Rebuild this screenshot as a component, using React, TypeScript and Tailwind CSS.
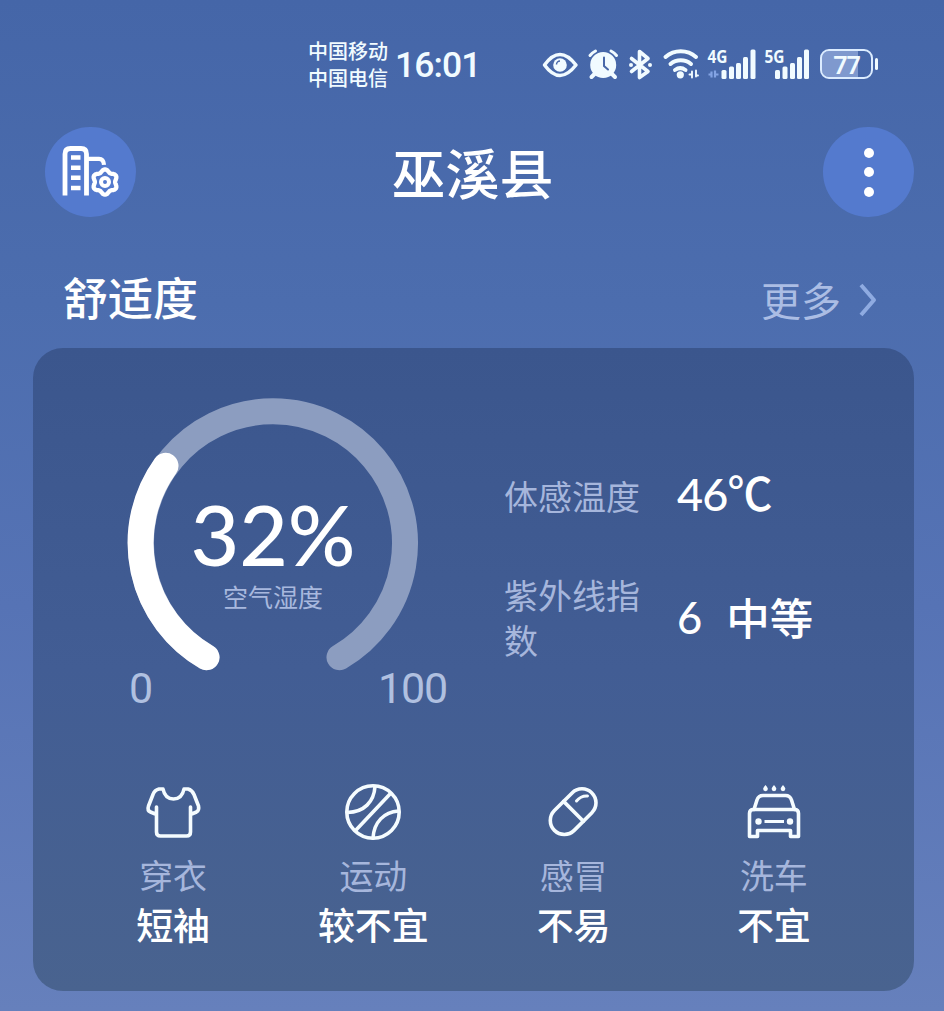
import type { ReactNode } from "react";

const cjk = "font-['Noto_Sans_CJK_SC',sans-serif]";
const lato = "font-['Lato','Noto_Sans_CJK_SC',sans-serif]";
const roboto = "font-['Roboto','Noto_Sans_CJK_SC',sans-serif]";

// Closed outline with six rounded lobes, one of them pointing straight up.
function lobedRing(cx: number, cy: number, radius: number, depth: number) {
  const points = Array.from({ length: 72 }, (_, i) => {
    const angle = (i / 72) * Math.PI * 2;
    const r = radius + depth * Math.cos(6 * angle);
    return `${(cx + r * Math.sin(angle)).toFixed(2)} ${(cy - r * Math.cos(angle)).toFixed(2)}`;
  });
  return `M${points.join("L")}Z`;
}

function StatusBar() {
  return (
    <div className="flex h-[64px] items-start pl-[308px] text-[#f1fbff]">
      <div className="w-[87px] shrink-0 text-[20px] font-medium leading-[27px]">
        <div>中国移动</div>
        <div>中国电信</div>
      </div>
      <div className={`mt-[8px] w-[145px] shrink-0 text-[35.500px] font-medium leading-[40px] tracking-[-0.9px] ${roboto}`}>
        16:01
      </div>
      <svg className="mt-[7px] shrink-0" width="43" height="40" viewBox="540 44 43 40" fill="none" stroke="currentColor">
        <path d="M544.5 65C551 56 556 54.5 560 54.5S569 56 576 65C569 74 564 75.500 560 75.500S551 74 544.500 65Z" strokeWidth="3.500" strokeLinejoin="round" />
        <circle cx="560" cy="65" r="6.800" fill="currentColor" stroke="none" />
        <path d="M556.500 64.500a3.500 3.500 0 0 1 3.500-3.500" stroke="#4868a9" strokeWidth="1.500" />
      </svg>
      <svg className="mt-[7px] shrink-0" width="42" height="40" viewBox="583 44 42 40" fill="none" stroke="currentColor" strokeLinecap="round">
        <circle cx="603.200" cy="65" r="13" fill="currentColor" stroke="none" />
        <path d="M590 55.500a17 17 0 0 1 5.500-4.500M616.500 55.500a17 17 0 0 0-5.500-4.500" strokeWidth="3" />
        <path d="M594.500 74l-3 3M612 74l3 3" strokeWidth="4" />
        <path d="M604 57.500V66l4 3.500" stroke="#4868a9" strokeWidth="2" />
      </svg>
      <svg className="mt-[7px] shrink-0" width="32" height="40" viewBox="625 44 32 40" fill="none" stroke="currentColor" strokeLinejoin="round" strokeLinecap="round">
        <path d="M631.500 58.500L648 71.500l-8.500 6V51.500l8.500 7L631.500 71.500" strokeWidth="3.600" />
        <circle cx="631" cy="65" r="2" fill="currentColor" stroke="none" />
        <circle cx="650" cy="65" r="2" fill="currentColor" stroke="none" />
      </svg>
      <svg className="mt-[7px] shrink-0" width="46" height="40" viewBox="657 44 46 40" fill="none" stroke="currentColor" strokeLinecap="round">
        <path d="M665.500 57a23 23 0 0 1 30.500 0M670.500 64a16 16 0 0 1 20.500 0M675 70a9 9 0 0 1 10.500 0" strokeWidth="4" />
        <circle cx="680.300" cy="74.800" r="3.600" fill="currentColor" stroke="none" />
        <path d="M689.500 74.500h2.500v-3M692 71.500v6M696 70.500v6M696 75.500h2" strokeWidth="1.900" />
      </svg>
      <svg className="mt-[7px] shrink-0" width="60" height="40" viewBox="703 44 60 40" fill="currentColor">
        <text x="707.500" y="63" fontSize="18" fontWeight="700" textLength="20" lengthAdjust="spacingAndGlyphs" fontFamily="Noto Sans">4G</text>
        <rect x="721.500" y="70" width="5" height="9" rx="1.500" />
        <rect x="729" y="66.500" width="5" height="12.500" rx="1.500" />
        <rect x="736" y="63" width="5" height="16" rx="1.500" />
        <rect x="743" y="57" width="5" height="22" rx="1.500" />
        <rect x="750.500" y="49.500" width="5" height="29.500" rx="1.500" />
        <path d="M708.500 74.500h3v-3v6M715 70.500v7M715 74.500h3.500" fill="none" stroke="#83a3e4" strokeWidth="2.200" />
      </svg>
      <svg className="mt-[7px] shrink-0" width="53" height="40" viewBox="763 44 53 40" fill="currentColor">
        <text x="764.500" y="63" fontSize="18" fontWeight="700" textLength="20" lengthAdjust="spacingAndGlyphs" fontFamily="Noto Sans">5G</text>
        <rect x="775" y="70" width="5" height="9" rx="1.500" />
        <rect x="782.500" y="66.500" width="5" height="12.500" rx="1.500" />
        <rect x="790" y="63" width="5" height="16" rx="1.500" />
        <rect x="797" y="57" width="5" height="22" rx="1.500" />
        <rect x="804" y="49.500" width="5" height="29.500" rx="1.500" />
      </svg>
      <div className="mt-[12px] ml-[4px] flex items-center gap-[2px]">
        <div className="flex h-[30px] w-[53px] items-center justify-center rounded-[9px] border-[2.5px] border-[#dcecff] bg-[linear-gradient(90deg,#7f99ce_0%,#7f99ce_74%,transparent_74%)] bg-clip-padding font-['Noto_Sans',sans-serif] text-[25px] font-semibold leading-[25px] tracking-[-1px]">
          77
        </div>
        <div className="h-[12px] w-[3px] rounded-full bg-[#f1fbff]" />
      </div>
    </div>
  );
}

function Header() {
  return (
    <div className="flex h-[90px] items-center justify-between pr-[30px] pl-[45px]">
      <button className="flex h-[90px] w-[91px] items-center justify-center rounded-full bg-[#547ace]">
        <svg width="91" height="90" viewBox="45 127 91 90" fill="none" stroke="#fff" strokeLinejoin="round">
          <path d="M65 195.500V154q0-5.500 5.500-5.500h10.500q5.500 0 5.500 5.500V195.500" strokeWidth="4.800" />
          <path d="M71 157.500h9.500M71 167.800h9.500M71 177.800h9.500M71 188h9.500" strokeWidth="4.600" />
          <path d="M88 158.800h11q4.500 0 5 6" strokeWidth="4.200" />
          <path d={lobedRing(105, 182, 11.4, 1.3)} strokeWidth="4.300" />
          <circle cx="105" cy="182" r="4" strokeWidth="4" />
        </svg>
      </button>
      <h1 className="mt-[-1px] mr-[14px] text-[54px] font-medium leading-[80px] text-white">巫溪县</h1>
      <button className="flex h-[90px] w-[91px] flex-col items-center justify-center gap-[9.500px] rounded-full bg-[#547ace]">
        <span className="size-[10px] rounded-full bg-white" />
        <span className="size-[10px] rounded-full bg-white" />
        <span className="size-[10px] rounded-full bg-white" />
      </button>
    </div>
  );
}

function Gauge() {
  return (
    <div className="relative h-[320px] w-[372px]">
      <svg className="block" width="372" height="320" viewBox="88 388 372 320" fill="none" strokeWidth="26" strokeLinecap="round">
        <path d="M206.500 657.300A132 132 0 1 1 339.500 657.300" stroke="#8c9dc0" />
        <path d="M206.500 657.300A132 132 0 0 1 165.500 465.800" stroke="#fff" />
      </svg>
      <div className="absolute top-[108px] left-0 w-[370px] text-center">
        <div className={`text-[84px] font-medium leading-[76px] text-white ${lato}`}>32%</div>
        <div className="mt-[6px] text-[25px] leading-[36px] text-[#a8b8de]">空气湿度</div>
      </div>
      <div className={`absolute top-[275px] right-[13px] left-[41px] flex justify-between text-[43px] leading-[50px] tracking-[-1.2px] text-[#b0c0e0] ${roboto}`}>
        <span>0</span>
        <span>100</span>
      </div>
    </div>
  );
}

function Tip({ icon, label, value }: { icon: ReactNode; label: string; value: string }) {
  return (
    <div className="flex flex-col items-center">
      <svg width="64" height="64" viewBox="0 0 64 64" fill="none" stroke="#f5fcff" strokeWidth="3.600" strokeLinecap="round" strokeLinejoin="round">
        {icon}
      </svg>
      <div className="mt-[7px] text-[34px] leading-[48px] text-[#a6b6dc]">{label}</div>
      <div className="mt-[1px] text-[37px] font-medium leading-[48px] text-white">{value}</div>
    </div>
  );
}

const shirt = (
  <path d="M15.500 27V52q0 4 4 4H45.500q4 0 4-4V27M15.500 34.500L9.500 32Q6 30.500 7.500 26L12 14.500Q13.500 10 18 9H22Q24 19 32.500 19T43 9H47Q51 10 53 14.500L57.500 26Q58.500 30.500 55.500 32L49.500 34.500" />
);

const ball = (
  <>
    <circle cx="32" cy="32" r="26.200" />
    <path d="M49.500 13.500L15 50M34 6.500C33 22 23 32 6.500 32.500M57.500 31C43 32 33 42 32 58" />
  </>
);

const pill = (
  <>
    <g transform="rotate(45 31.5 32)">
      <rect x="17" y="5.500" width="28" height="53" rx="14" />
      <path d="M17 31.500H45" />
    </g>
    <path d="M34.500 21Q39 15.500 45.500 16" strokeWidth="3" />
  </>
);

const car = (
  <>
    <path d="M12 29.500L15 20Q16.500 15.500 21 15.500H43.500Q48 15.500 49.500 20L52.500 29.500" />
    <path d="M11.500 29.500H52.500Q56.500 29.500 56.500 33.500V56.500H48.500V50.500H15.500V56.500H7.500V33.500Q7.500 29.500 11.500 29.500Z" />
    <path d="M22.500 41.500H42" strokeWidth="3" strokeLinecap="butt" />
    <g fill="#f5fcff" stroke="none">
      <circle cx="16.500" cy="41.500" r="3.200" />
      <circle cx="48" cy="41.500" r="3.200" />
      <path d="M23.500 5q2.400 2.700 2.400 3.800a2.400 2.400 0 0 1-4.800 0q0-1.100 2.400-3.800ZM32 5q2.400 2.700 2.400 3.800a2.400 2.400 0 0 1-4.800 0q0-1.100 2.400-3.800ZM41 5q2.400 2.700 2.400 3.800a2.400 2.400 0 0 1-4.800 0q0-1.100 2.400-3.800Z" />
    </g>
  </>
);

export default function App() {
  return (
    <main className={`h-[1011px] w-[944px] overflow-hidden bg-[linear-gradient(180deg,#4566a8_0%,#4c6dae_30%,#5673b5_60%,#6680bc_100%)] pt-[37px] ${cjk}`}>
      <StatusBar />
      <div className="pt-[26px]">
        <Header />
      </div>
      <div className="flex h-[131px] items-center justify-between pt-[29px] pr-[65px] pl-[63px]">
        <h2 className="text-[45px] font-medium leading-[60px] text-white">舒适度</h2>
        <div className="mt-[3px] flex items-center text-[40px] leading-[60px] text-[#abbde4]">
          更多
          <svg className="mt-[2px] ml-[14px]" width="24" height="40" viewBox="0 0 24 40" fill="none" stroke="#8fabe1" strokeWidth="4">
            <path d="M6 5L19 20 6 35" strokeLinejoin="round" />
          </svg>
        </div>
      </div>
      <section className="mr-[30px] ml-[33px] h-[643px] rounded-[30px] bg-[linear-gradient(180deg,#3b568d_0%,#425d94_50%,#49638f_100%)] px-[40px] pt-[40px]">
        <div className="flex">
          <div className="ml-[15px]">
            <Gauge />
          </div>
          <div className="ml-[44px] grid grid-cols-[173px_1fr] content-start pt-[85px]">
            <div className="text-[34px] leading-[45px] text-[#a6b6dc]">体感温度</div>
            <div className={`-mt-px whitespace-nowrap text-[45px] font-medium leading-[45px] tracking-[-0.8px] text-white ${lato}`}>
              46℃
            </div>
            <div className="mt-[54px] w-[137px] text-[34px] leading-[45px] text-[#a6b6dc]">紫外线指数</div>
            <div className={`mt-[54px] flex items-center gap-[24px] whitespace-nowrap text-[43.500px] font-medium leading-[60px] text-white ${lato}`}>
              <span>6</span>
              <span className={cjk}>中等</span>
            </div>
          </div>
        </div>
        <div className="mt-[72px] grid grid-cols-4">
          <Tip icon={shirt} label="穿衣" value="短袖" />
          <Tip icon={ball} label="运动" value="较不宜" />
          <Tip icon={pill} label="感冒" value="不易" />
          <Tip icon={car} label="洗车" value="不宜" />
        </div>
      </section>
    </main>
  );
}
